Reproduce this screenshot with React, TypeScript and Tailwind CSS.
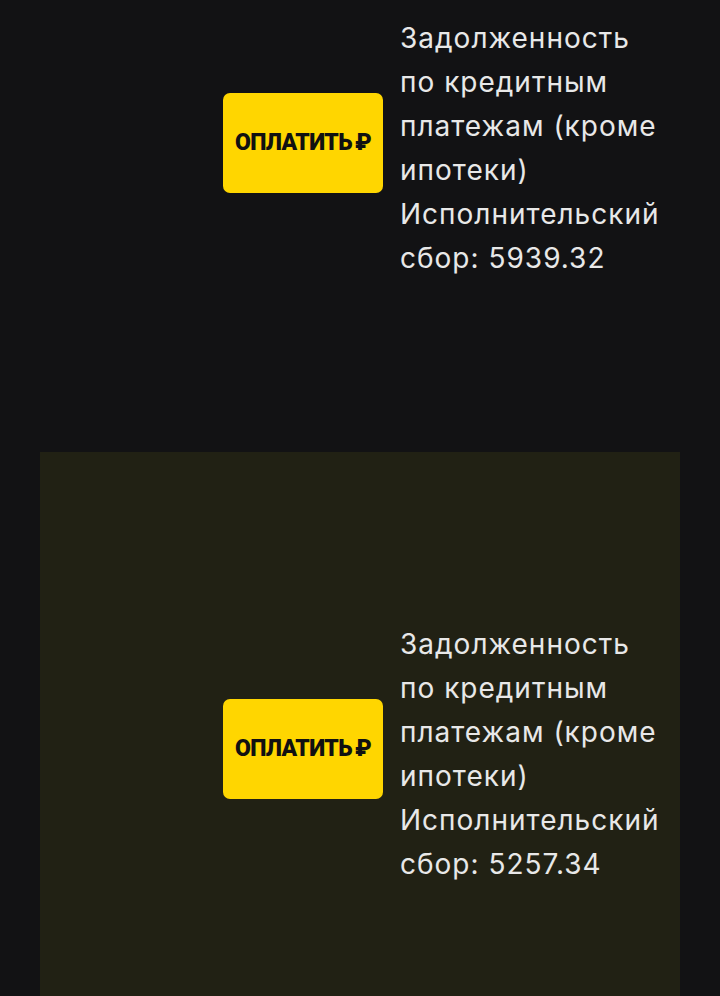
import React from 'react'

interface Debt {
  amount: string
}

const debts: Debt[] = [{ amount: '5939.32' }, { amount: '5257.34' }]

function DebtRow({ amount }: Debt) {
  return (
    <div className="flex items-center justify-end gap-[17px] pr-[16px]">
      <button className="w-[160px] h-[100px] mb-[10px] rounded-[7px] bg-[#FFD600] flex items-center justify-center text-[#111] font-black text-[23px] tracking-[-0.6px] font-['Roboto',sans-serif]">
        ОПЛАТИТЬ<span className="ml-[3px]">₽</span>
      </button>
      <div className="w-[264px] text-[28px] leading-[44px] tracking-[1px] text-[#e8e8e8] font-['Inter',sans-serif]">
        {`Задолженность по кредитным платежам (кроме ипотеки) Исполнительский сбор: ${amount}`}
      </div>
    </div>
  )
}

export default function App() {
  return (
    <div className="h-[996px] overflow-hidden bg-[#121214]">
      <div className="h-[296px] flex flex-col justify-center px-[40px]">
        <DebtRow amount={debts[0].amount} />
      </div>
      <div className="mt-[156px] mx-[40px] h-[600px] pt-[4px] bg-[#212114] flex flex-col justify-center">
        <DebtRow amount={debts[1].amount} />
      </div>
    </div>
  )
}
